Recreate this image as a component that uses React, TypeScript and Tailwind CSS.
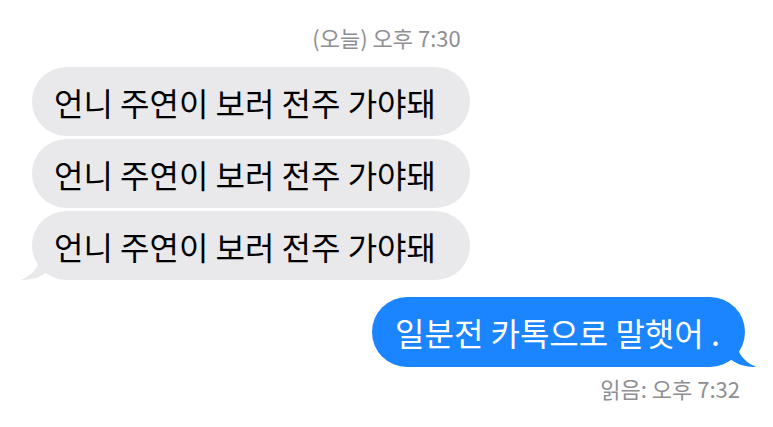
import React from "react";

const font = { fontFamily: '"Noto Sans CJK KR", "Noto Sans", sans-serif' };

const received = ["언니 주연이 보러 전주 가야돼", "언니 주연이 보러 전주 가야돼", "언니 주연이 보러 전주 가야돼"];

const LeftTail: React.FC = () => (
  <svg className="absolute -left-[11px] bottom-0" width="30" height="30" viewBox="0 0 30 30">
    <path d="M20 0 C20 14 14 24 0 30 C10 30 18 28 26 22 L30 0 Z" fill="#e9e9eb" />
  </svg>
);

const RightTail: React.FC = () => (
  <svg className="absolute -right-[11px] bottom-0" width="30" height="30" viewBox="0 0 30 30">
    <path d="M10 0 C10 14 16 24 30 30 C20 30 12 28 4 22 L0 0 Z" fill="#1b84ff" />
  </svg>
);

const App: React.FC = () => {
  return (
    <div className="w-[773px] h-[427px] bg-white flex flex-col pt-[22px]" style={font}>
      <div className="text-center text-[22px] text-[#8e8e93] leading-[30px]">(오늘) 오후 7:30</div>

      <div className="flex flex-col gap-[3px] items-start ml-[32px] mt-[15px]">
        {received.map((msg, i) => (
          <div
            key={i}
            className="relative h-[69px] w-[438px] rounded-[35px] bg-[#e9e9eb] flex items-center pl-[22px] text-[32px] leading-[40px] text-black"
          >
            {i === received.length - 1 && <LeftTail />}
            <span className="relative">{msg}</span>
          </div>
        ))}
      </div>

      <div className="flex justify-end mr-[28px] mt-[17px]">
        <div className="relative h-[70px] w-[373px] rounded-[35px] bg-[#1b84ff] flex items-center pl-[23px] text-[32px] leading-[40px] text-white">
          <RightTail />
          <span className="relative">일분전 카톡으로 말햇어 .</span>
        </div>
      </div>

      <div className="text-right mr-[33px] mt-[6px] text-[22px] text-[#8e8e93] leading-[30px]">읽음: 오후 7:32</div>
    </div>
  );
};

export default App;
